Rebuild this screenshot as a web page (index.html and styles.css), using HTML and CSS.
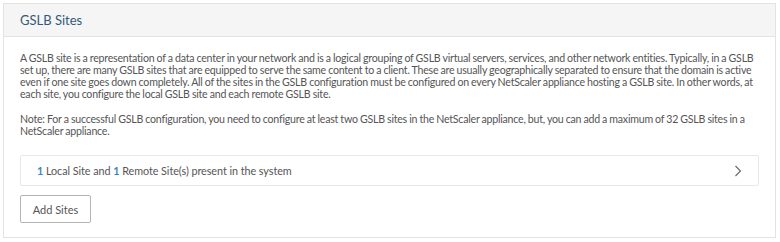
FILE: index.html
```html
<!DOCTYPE html>
<html>
<head>
<meta charset="utf-8">
<link rel="stylesheet" href="styles.css">
</head>
<body>
<div class="panel">
  <div class="panel-header">GSLB Sites</div>
  <div class="panel-body">
    <p class="desc">A GSLB site is a representation of a data center in your network and is a logical grouping of GSLB virtual servers, services, and other network entities. Typically, in a GSLB set up, there are many GSLB sites that are equipped to serve the same content to a client. These are usually geographically separated to ensure that the domain is active even if one site goes down completely. All of the sites in the GSLB configuration must be configured on every NetScaler appliance hosting a GSLB site. In other words, at each site, you configure the local GSLB site and each remote GSLB site.</p>
    <p class="desc note">Note: For a successful GSLB configuration, you need to configure at least two GSLB sites in the NetScaler appliance, but, you can add a maximum of 32 GSLB sites in a NetScaler appliance.</p>
    <div class="site-row">
      <span class="site-text"><b class="num">1</b> Local Site and <b class="num">1</b> Remote Site(s) present in the system</span>
      <svg class="chev" width="8" height="12" viewBox="0 0 8 12"><path d="M1.5 1 L6.5 6 L1.5 11" fill="none" stroke="#666" stroke-width="1.1"/></svg>
    </div>
    <button class="btn">Add Sites</button>
  </div>
</div>
</body>
</html>
```
FILE: styles.css
```css
html, body { margin: 0; padding: 0; background: #fff; }
body { padding: 3px 4px 0 3px; font-family: "Lato", "Liberation Sans", sans-serif; color: #555; }
.panel { border: 1px solid #e3e3e3; width: 773px; height: 235px; box-sizing: border-box; }
.panel-header { height: 33px; box-sizing: border-box; background: #f5f5f5; border-bottom: 1px solid #e3e3e3; padding: 0 16px; display: flex; align-items: center; font-size: 13px; color: #34597a; }
.panel-body { padding: 15px 12px 0 16px; }
.desc { margin: 0 0 13px 0; font-size: 10.6px; letter-spacing: -0.22px; word-spacing: -0.3px; line-height: 12px; color: #555; }
.note { margin-bottom: 18px; }
.site-row { height: 31px; box-sizing: border-box; border: 1px solid #e8e8e8; border-radius: 2px; width: 739px; display: flex; align-items: center; justify-content: space-between; padding: 0 16px 0 16px; font-size: 10.8px; letter-spacing: -0.05px; color: #555; }
.num { color: #3d84c6; font-weight: bold; }
.btn { margin-top: 9px; height: 28px; width: 71px; border: 1px solid #b4b4b4; border-radius: 2px; background: #fff; font-family: inherit; font-size: 11px; color: #555; padding: 0; }
```
